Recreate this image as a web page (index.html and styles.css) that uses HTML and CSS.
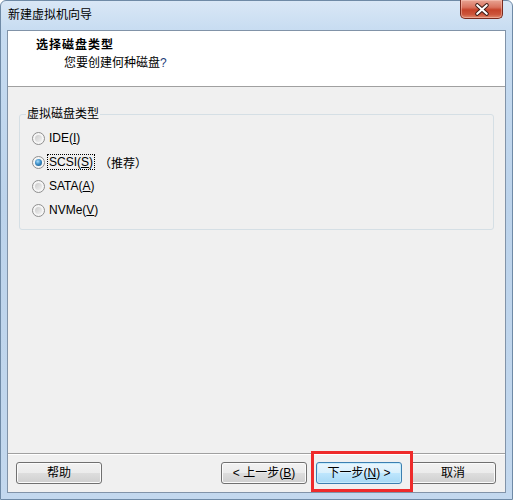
FILE: index.html
```html
<!DOCTYPE html>
<html lang="zh-CN">
<head>
<meta charset="utf-8">
<title>新建虚拟机向导</title>
<link rel="stylesheet" href="styles.css">
</head>
<body>
<div class="window">
  <div class="titlebar">
    <span class="title">新建虚拟机向导</span>
    <div class="close">
      <svg width="43" height="19" viewBox="0 0 43 19">
        <path d="M17 5 L27 14 M27 5 L17 14" stroke="#3a1a14" stroke-width="4.2" stroke-linecap="round" fill="none"/>
        <path d="M17 5 L27 14 M27 5 L17 14" stroke="#ffffff" stroke-width="2.2" stroke-linecap="round" fill="none"/>
      </svg>
    </div>
  </div>
  <div class="client">
    <div class="header">
      <div class="h-title">选择磁盘类型</div>
      <div class="h-sub">您要创建何种磁盘<span class="q">?</span></div>
    </div>
    <div class="content">
      <fieldset class="group">
        <legend>虚拟磁盘类型</legend>
        <div class="options">
          <div class="opt"><span class="radio"></span><span class="lbl">IDE(<u>I</u>)</span></div>
          <div class="opt"><span class="radio checked"></span><span class="lbl focus">SCSI(<u>S</u>)</span><span class="rec">（推荐）</span></div>
          <div class="opt"><span class="radio"></span><span class="lbl">SATA(<u>A</u>)</span></div>
          <div class="opt"><span class="radio"></span><span class="lbl">NVMe(<u>V</u>)</span></div>
        </div>
      </fieldset>
    </div>
    <div class="footer">
      <button class="btn">帮助</button>
      <button class="btn push">&lt; 上一步(<u>B</u>)</button>
      <button class="btn default">下一步(<u>N</u>) &gt;</button>
      <button class="btn">取消</button>
    </div>
  </div>
  <div class="annot"></div>
</div>
</body>
</html>
```
FILE: styles.css
```css
* { box-sizing: border-box; }
html, body { margin: 0; padding: 0; }
body {
  width: 513px;
  height: 500px;
  overflow: hidden;
  font-family: "Liberation Sans", "Noto Sans CJK SC", sans-serif;
  font-size: 12px;
  color: #000;
}
.window {
  position: relative;
  width: 513px;
  height: 500px;
  display: flex;
  flex-direction: column;
  background: linear-gradient(to bottom, #d9e7f6 0px, #c7dcf1 30px, #bcd3eb 200px, #c3d8ee 500px);
  border: 1px solid #6f8aa6;
  border-radius: 6px 6px 0 0;
}
.titlebar {
  height: 29px;
  flex: none;
  display: flex;
  justify-content: space-between;
  align-items: flex-start;
  padding-left: 7px;
  padding-right: 9px;
}
.title {
  line-height: 16px;
  margin-top: 6px;
  color: #000;
}
.close {
  width: 43px;
  height: 19px;
  margin-top: -1px;
  border: 1px solid #7a2a1e;
  border-top: none;
  border-radius: 0 0 5px 5px;
  background: linear-gradient(to bottom, #e8a493 0%, #d9735f 40%, #c5432a 55%, #cc553b 80%, #e08a6e 100%);
  box-shadow: inset 0 0 0 1px rgba(255, 210, 200, 0.45);
  display: flex;
}
.client {
  flex: 1;
  margin: 0 6px 6px 6px;
  border: 1px solid #8193a8;
  background: #f0f0f0;
  display: flex;
  flex-direction: column;
}
.header {
  height: 56px;
  flex: none;
  background: #ffffff;
  border-bottom: 1px solid #a0a0a0;
  padding-top: 6px;
}
.h-title {
  font-weight: bold;
  line-height: 16px;
  padding-left: 28px;
  letter-spacing: 1px;
}
.h-sub {
  line-height: 16px;
  margin-top: 2px;
  padding-left: 56px;
}
.h-sub .q { color: #1e3c78; }
.content {
  flex: 1;
  padding: 20px 11px 0 11px;
}
.group {
  margin: 0;
  padding: 0 0 7px 0;
  border: 1px solid #d5dfe5;
  border-radius: 3px;
  min-width: 0;
}
.group legend {
  margin-left: 6px;
  padding: 0 1px;
  line-height: 14px;
}
.options {
  padding-top: 5px;
  padding-left: 12px;
}
.opt {
  height: 24px;
  display: flex;
  align-items: center;
}
.radio {
  position: relative;
  width: 13px;
  height: 13px;
  border-radius: 50%;
  border: 1px solid #8f8f8f;
  background: radial-gradient(circle at 50% 50%, #e6e6e6 0%, #f4f4f4 50%, #fdfdfd 100%);
  box-shadow: inset 0 0 0 1px #f6f6f6;
  margin-right: 3px;
  flex: none;
}
.radio::before {
  content: "";
  position: absolute;
  left: 2px; top: 2px;
  width: 7px; height: 7px;
  border-radius: 50%;
  background: linear-gradient(135deg, #cbcbcb, #f2f2f2);
}
.radio.checked::before {
  left: 2px; top: 2px;
  width: 7px; height: 7px;
  background: radial-gradient(circle at 40% 35%, #a7dcfb 0%, #3d8fc8 45%, #174f7c 100%);
}
.lbl {
  line-height: 14px;
  padding: 0 1px;
}
.lbl.focus {
  outline: 1px dotted #000;
  outline-offset: 0;
}
.rec { margin-left: 5px; }
.footer {
  height: 39px;
  flex: none;
  border-top: 1px solid #a0a0a0;
  box-shadow: inset 0 1px 0 #ffffff;
  display: flex;
  align-items: flex-start;
  gap: 8px;
  padding: 8px 9px 0 8px;
}
.btn {
  width: 86px;
  height: 22px;
  font-family: "Liberation Sans", "Noto Sans CJK SC", sans-serif;
  font-size: 12px;
  color: #000;
  border: 1px solid #707070;
  border-radius: 3px;
  background: linear-gradient(to bottom, #f2f2f2 0%, #ebebeb 50%, #dddddd 51%, #cfcfcf 100%);
  box-shadow: inset 0 0 0 1px #fbfbfb;
  padding: 0;
  line-height: 18px;
}
.btn.push { margin-left: auto; margin-right: 1px; }
.btn.default {
  border-color: #3c7fb1;
  background: linear-gradient(to bottom, #eaf6fd 0%, #d9f0fc 50%, #bee6fd 51%, #a7d9f5 100%);
  box-shadow: inset 0 0 0 1px #c6ecfc;
}
.annot {
  position: absolute;
  left: 310px;
  top: 450px;
  width: 102px;
  height: 41px;
  border: 3px solid #ee2b2b;
}
```
